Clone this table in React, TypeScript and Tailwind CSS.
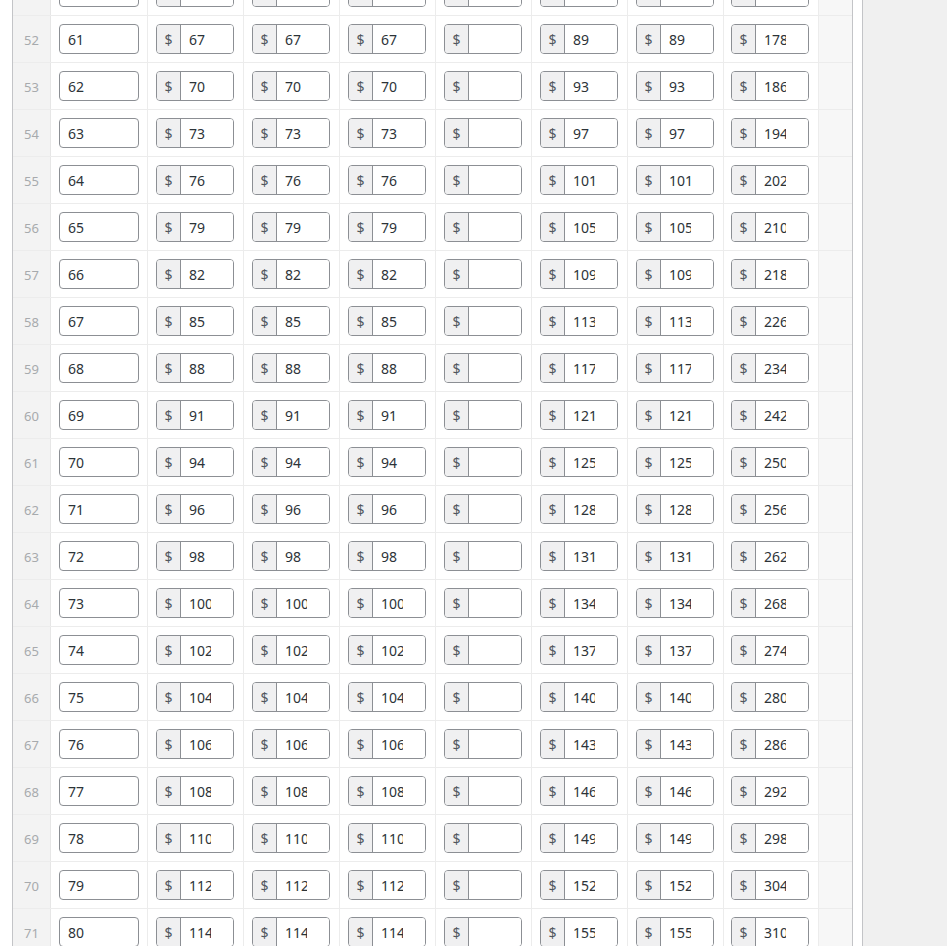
const ROWS = [
  { n: 51, base: 60, a: 64, b: 85, c: 170 },
  { n: 52, base: 61, a: 67, b: 89, c: 178 },
  { n: 53, base: 62, a: 70, b: 93, c: 186 },
  { n: 54, base: 63, a: 73, b: 97, c: 194 },
  { n: 55, base: 64, a: 76, b: 101, c: 202 },
  { n: 56, base: 65, a: 79, b: 105, c: 210 },
  { n: 57, base: 66, a: 82, b: 109, c: 218 },
  { n: 58, base: 67, a: 85, b: 113, c: 226 },
  { n: 59, base: 68, a: 88, b: 117, c: 234 },
  { n: 60, base: 69, a: 91, b: 121, c: 242 },
  { n: 61, base: 70, a: 94, b: 125, c: 250 },
  { n: 62, base: 71, a: 96, b: 128, c: 256 },
  { n: 63, base: 72, a: 98, b: 131, c: 262 },
  { n: 64, base: 73, a: 100, b: 134, c: 268 },
  { n: 65, base: 74, a: 102, b: 137, c: 274 },
  { n: 66, base: 75, a: 104, b: 140, c: 280 },
  { n: 67, base: 76, a: 106, b: 143, c: 286 },
  { n: 68, base: 77, a: 108, b: 146, c: 292 },
  { n: 69, base: 78, a: 110, b: 149, c: 298 },
  { n: 70, base: 79, a: 112, b: 152, c: 304 },
  { n: 71, base: 80, a: 114, b: 155, c: 310 },
]

const cell = 'border-r border-[#ececec] px-2 py-2 flex items-center'

function PriceInput({ value }: { value: number | '' }) {
  return (
    <div className="flex w-[78px] h-[30px] rounded-[4px] border border-[#8c8f94] overflow-hidden bg-white">
      <span className="w-[24px] shrink-0 flex items-center justify-center bg-[#f0f0f1] border-r border-[#8c8f94] text-[14px] text-[#50575e]">
        $
      </span>
      <input
        type="number"
        readOnly
        value={value}
        className="min-w-0 flex-1 pl-2 pr-[7px] text-[14px] text-[#2c3338] bg-white outline-none"
      />
    </div>
  )
}

export default function App() {
  return (
    <div
      className="flex h-[946px] overflow-hidden bg-[#f0f0f0]"
      style={{ fontFamily: '"Noto Sans", "Open Sans", Arial, sans-serif' }}
    >
      <div className="w-[863px] shrink-0 bg-white border-r border-[#c3c4c7] pl-[12px] overflow-hidden">
        <div className="w-[841px] border-x border-[#c3c4c7] -mt-[31px]">
          {ROWS.map((r) => (
            <div
              key={r.n}
              className="grid grid-cols-[38px_97px_96px_96px_96px_96px_96px_96px_95px_33px] h-[47px] border-b border-[#ececec]"
            >
              <div className="border-r border-[#e6e6e6] bg-[#f3f3f3] flex items-center justify-center pt-[3px] text-[13px] text-[#a7aaad]">
                {r.n}
              </div>
              <div className={cell}>
                <input
                  type="number"
                  readOnly
                  value={r.base}
                  className="w-[80px] h-[30px] rounded-[4px] border border-[#8c8f94] px-2 text-[14px] text-[#2c3338] bg-white outline-none"
                />
              </div>
              <div className={cell}>
                <PriceInput value={r.a} />
              </div>
              <div className={cell}>
                <PriceInput value={r.a} />
              </div>
              <div className={cell}>
                <PriceInput value={r.a} />
              </div>
              <div className={cell}>
                <PriceInput value="" />
              </div>
              <div className={cell}>
                <PriceInput value={r.b} />
              </div>
              <div className={cell}>
                <PriceInput value={r.b} />
              </div>
              <div className="border-r border-[#ececec] px-[7px] py-2 flex items-center">
                <PriceInput value={r.c} />
              </div>
              <div className="bg-[#f7f7f7]" />
            </div>
          ))}
        </div>
      </div>
    </div>
  )
}
